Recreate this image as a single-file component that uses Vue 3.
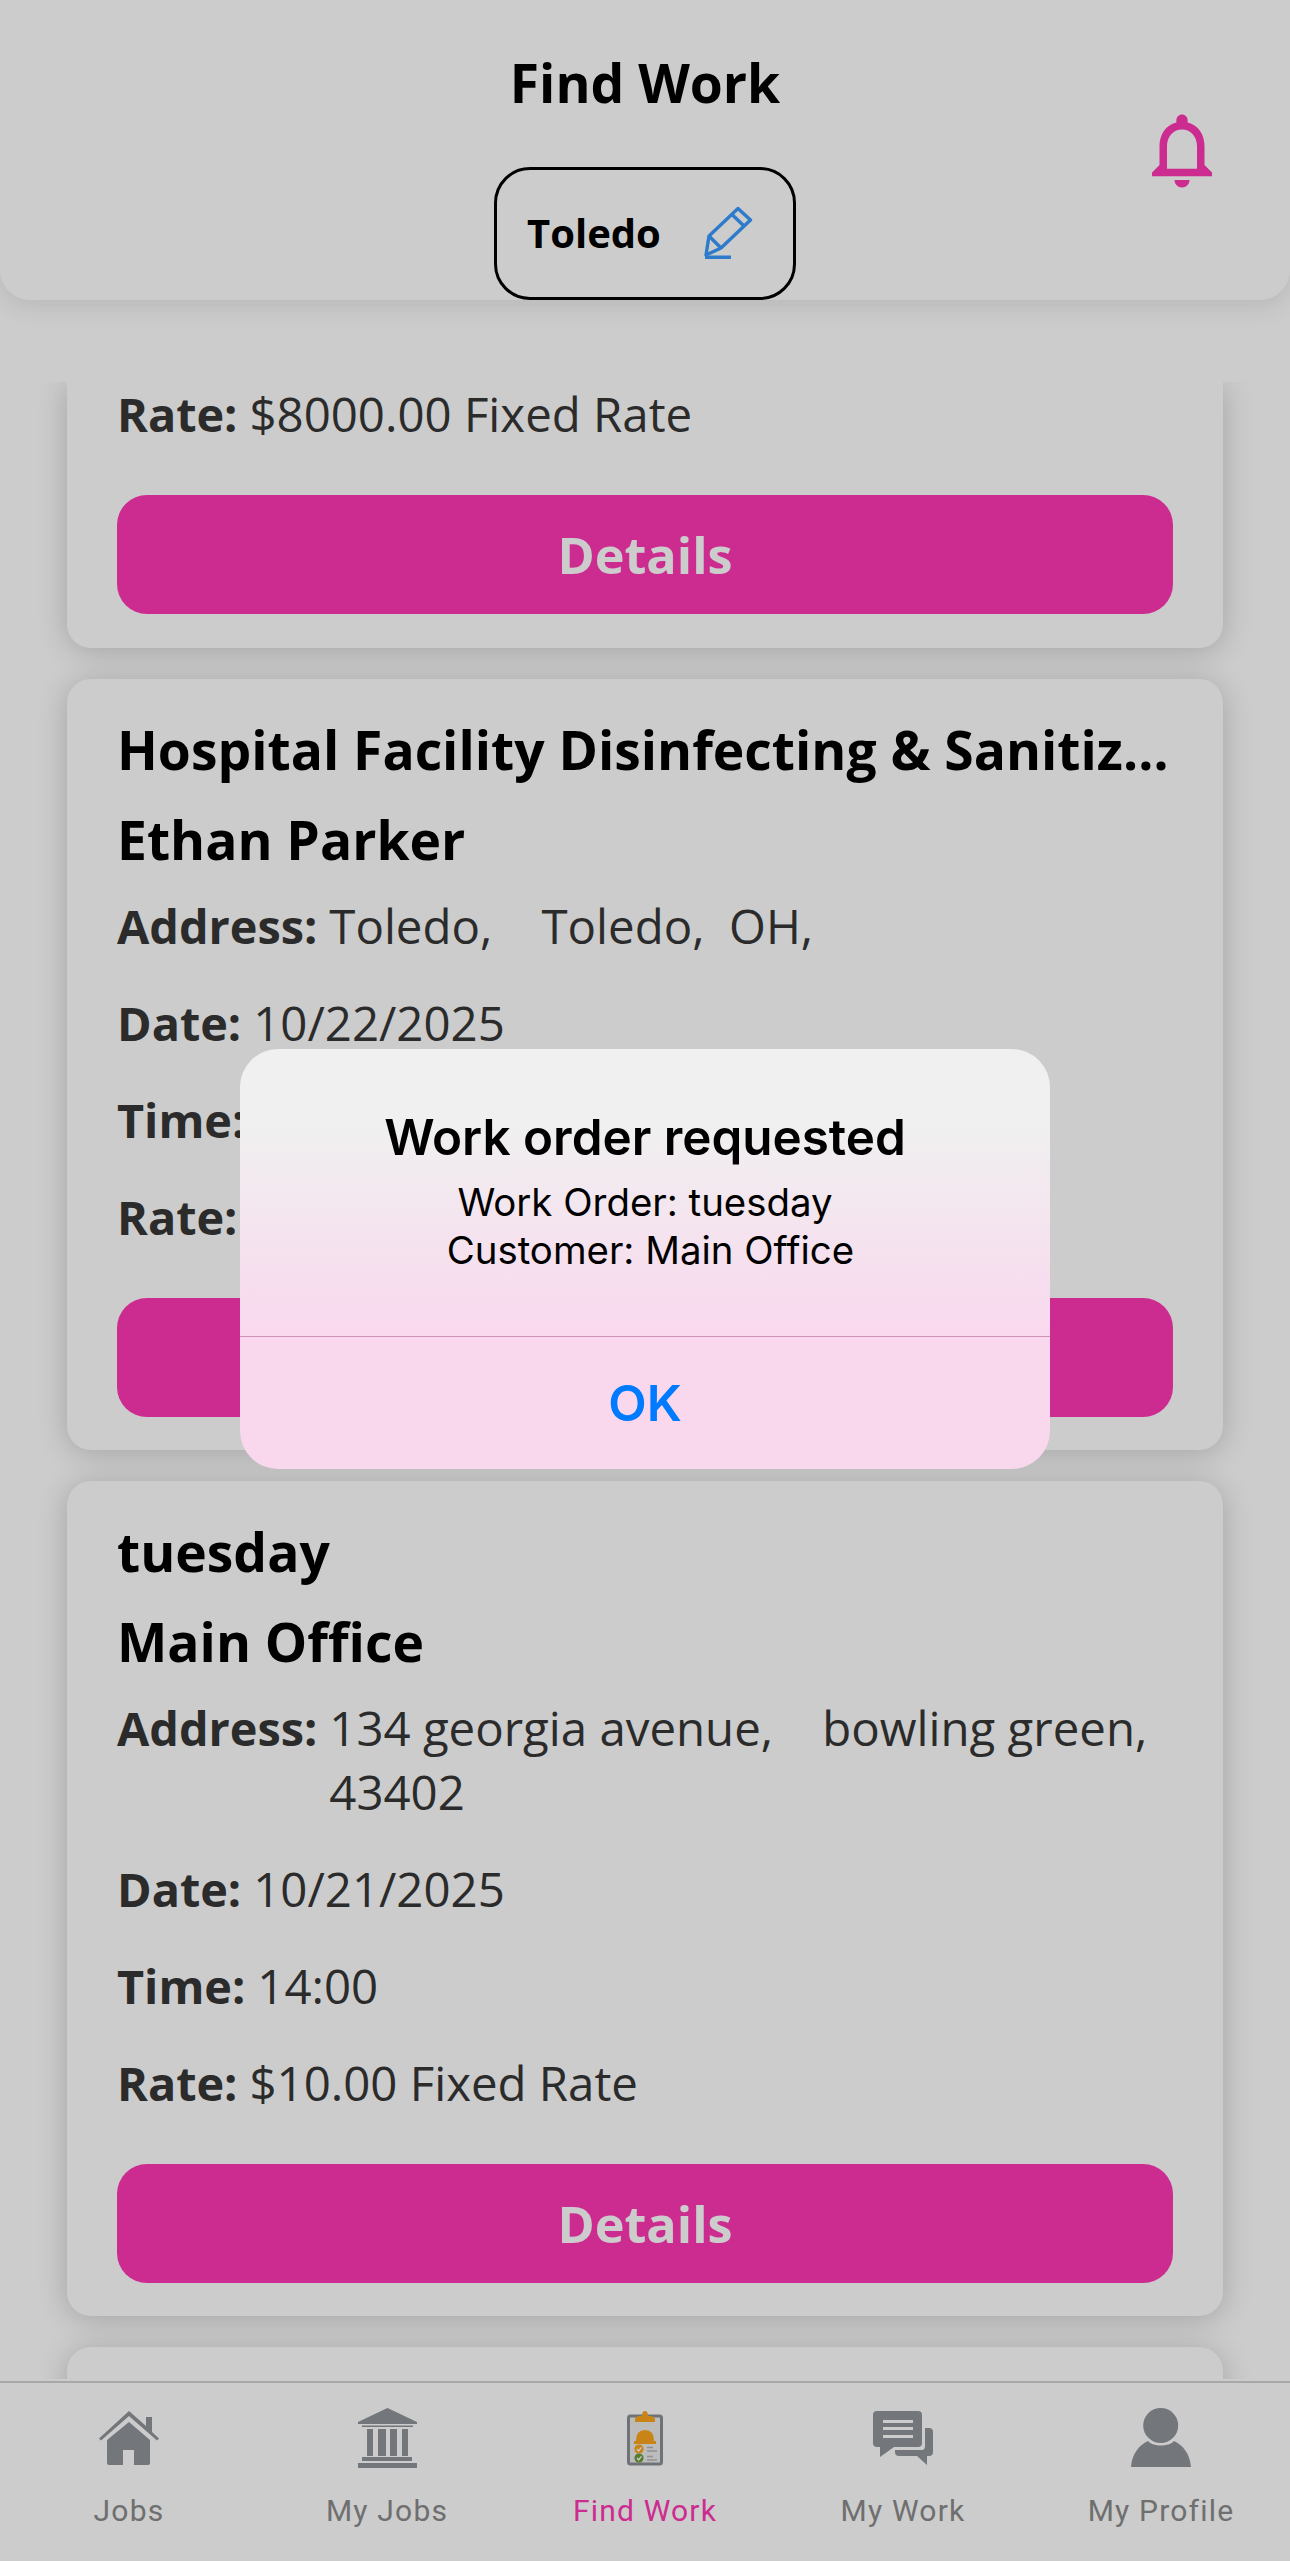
<template>
  <div class="screen">
    <header class="top-bar">
      <h1 class="page-title">Find Work</h1>
      <button class="city-chip">
        <span>{{ city }}</span>
        <svg class="pencil" width="50" height="54" viewBox="0 0 50 54" fill="none" stroke="currentColor" stroke-width="3.4">
          <path d="M2 50 5 31 34 3.5 46.5 15 17 43Z" stroke-linejoin="round"/>
          <path d="M5 31 17 43M28 9.5 40 21M1 52.3H27"/>
        </svg>
      </button>
      <svg class="bell" width="90" height="90" viewBox="0 0 24 24" fill="currentColor">
        <path d="M12 22c1.1 0 2-.9 2-2h-4c0 1.1.9 2 2 2zm6-6v-5c0-3.07-1.63-5.64-4.5-6.32V4c0-.83-.67-1.5-1.5-1.5s-1.5.67-1.5 1.5v.68C7.64 5.36 6 7.92 6 11v5l-2 2v1h16v-1l-2-2zm-2 1H8v-6c0-2.48 1.51-4.5 4-4.5s4 2.02 4 4.5v6z"/>
      </svg>
    </header>

    <main class="job-list">
      <article v-for="job in jobs" :key="job.id" class="job-card" :class="{ 'is-cut': job.rate && !job.title, 'is-next': !job.rate }">
        <template v-if="job.title">
          <h2 class="job-title">{{ job.title }}</h2>
          <h3 class="job-customer">{{ job.customer }}</h3>
          <div class="row"><b>Address:</b><span class="value">{{ job.address }}</span></div>
          <div class="row"><b>Date:</b><span class="value">{{ job.date }}</span></div>
          <div class="row"><b>Time:</b><span class="value">{{ job.time }}</span></div>
        </template>
        <template v-if="job.rate">
          <div class="row"><b>Rate:</b><span class="value">{{ job.rate }}</span></div>
          <button class="details-btn">Details</button>
        </template>
      </article>
    </main>

    <nav class="tab-bar">
      <div v-for="tab in tabs" :key="tab.label" class="tab" :class="{ active: tab.active }">
        <svg v-if="tab.icon === 'home'" class="tab-icon" width="60" height="60" viewBox="0 0 60 60" fill="currentColor">
          <path d="M30 3 47 18V9H53V24L60 30.5 58 32.5 30 8 2 32.5 0 30.5Z"/>
          <path d="M30 14 51 32V55Q51 57 49 57H35V42H24V57H10Q8 57 8 55V32Z"/>
        </svg>
        <svg v-else-if="tab.icon === 'bank'" class="tab-icon" width="60" height="60" viewBox="0 0 60 60" fill="currentColor">
          <path d="M30.5 0 60 14V16H1V14Z"/>
          <path d="M5 17.5H56V19H5ZM10 21H16V48H10ZM21 21H29V48H21ZM33 21H40V48H33ZM45 21H51V48H45ZM5 49H55V53H5ZM1 55H60V60H1Z"/>
        </svg>
        <svg v-else-if="tab.icon === 'clipboard'" class="tab-icon" width="60" height="60" viewBox="0 0 60 60">
          <rect x="13.5" y="8" width="33" height="48" rx="2" fill="#ececec" stroke="#8a9095" stroke-width="3"/>
          <path d="M20 12Q20 8 25 8H27Q27 3 30 3T33 8H35Q40 8 40 12V14H20Z" fill="#fba51c"/>
          <path d="M21 33Q21 22 30 22T39 33H41V36H19V33Z" fill="#fba51c"/>
          <circle cx="24" cy="41" r="4.6" fill="#fba51c"/>
          <circle cx="24" cy="50" r="4.6" fill="#6c9c3c"/>
          <path d="M22 41 23.7 43 26.4 39.4M22 50 23.7 52 26.4 48.4" stroke="#fff" stroke-width="1.3" fill="none"/>
          <path d="M32 39.5H38M32 43H42M32 48.5H38M32 52H42" stroke="#b5b5b5" stroke-width="1.6"/>
        </svg>
        <svg v-else-if="tab.icon === 'chat'" class="tab-icon" width="60" height="60" viewBox="0 0 60 60" fill="currentColor">
          <path fill-rule="evenodd" d="M4 3H45Q49 3 49 7V35Q49 39 45 39H21L7 49V39H4Q0 39 0 35V7Q0 3 4 3ZM10 12V15H40V12ZM10 19V22H40V19ZM10 27V30H40V27Z"/>
          <path d="M52 20H56Q60 20 60 24V44Q60 48 56 48H54V57L44 48H26Q22 48 22 44V42H49Q52 42 52 38Z"/>
        </svg>
        <svg v-else class="tab-icon" width="60" height="60" viewBox="0 0 60 60" fill="currentColor">
          <ellipse cx="29.7" cy="17.5" rx="17.5" ry="17.5"/>
          <path d="M0 59C1 46 8 37 17 33 22 39 38 39 43 33 52 37 59 46 60 59Z"/>
        </svg>
        <span class="tab-label">{{ tab.label }}</span>
      </div>
    </nav>

    <div class="dim-layer">
      <div class="alert">
        <div class="alert-body">
          <h4 class="alert-title">Work order requested</h4>
          <p class="alert-text">Work Order: tuesday</p>
          <p class="alert-text"> Customer: Main Office</p>
        </div>
        <button class="alert-ok">OK</button>
      </div>
    </div>
  </div>
</template>

<script setup>
const city = 'Toledo'

const jobs = [
  { id: 1, rate: '$8000.00 Fixed Rate' },
  {
    id: 2,
    title: 'Hospital Facility Disinfecting & Sanitization',
    customer: 'Ethan Parker',
    address: 'Toledo,    Toledo,  OH,',
    date: '10/22/2025',
    time: '09:00',
    rate: '$500.00 Fixed Rate'
  },
  {
    id: 3,
    title: 'tuesday',
    customer: 'Main Office',
    address: '134 georgia avenue,    bowling green,  43402',
    date: '10/21/2025',
    time: '14:00',
    rate: '$10.00 Fixed Rate'
  },
  { id: 4 }
]

const tabs = [
  { label: 'Jobs', icon: 'home' },
  { label: 'My Jobs', icon: 'bank' },
  { label: 'Find Work', icon: 'clipboard', active: true },
  { label: 'My Work', icon: 'chat' },
  { label: 'My Profile', icon: 'person' }
]
</script>

<style>
html, body {
  margin: 0;
  background: #fff;
}
</style>

<style scoped>
.screen {
  position: relative;
  display: flex;
  flex-direction: column;
  width: 1290px;
  height: 2561px;
  overflow: hidden;
  background: #fff;
  font-family: "Open Sans", sans-serif;
}

.top-bar {
  position: relative;
  z-index: 2;
  display: grid;
  grid-template-columns: 1fr auto 1fr;
  grid-template-rows: 167px 133px;
  flex: none;
  background: #fff;
  border-radius: 0 0 30px 30px;
  box-shadow: 0 6px 24px rgba(0, 0, 0, 0.1);
}

.page-title {
  grid-column: 2;
  grid-row: 1;
  margin: 48px 0 0;
  font-size: 53.4px;
  line-height: 70px;
  font-weight: 700;
  text-align: center;
  color: #000;
}

.city-chip {
  grid-column: 2;
  grid-row: 2;
  display: flex;
  align-items: center;
  gap: 43px;
  box-sizing: border-box;
  width: 302px;
  height: 133px;
  padding: 0 0 3px 30px;
  background: transparent;
  border: 3px solid #000;
  border-radius: 36px;
  font-family: inherit;
  font-size: 40px;
  font-weight: 700;
  color: #000;
}

.pencil {
  color: #3a9aff;
}

.bell {
  grid-column: 3;
  grid-row: 1 / span 2;
  justify-self: end;
  margin: 105px 63px 0 0;
  color: #ff37b4;
}

.job-list {
  flex: 1;
  display: flex;
  flex-direction: column;
  gap: 31px;
  min-height: 0;
  margin-top: 82px;
  margin-bottom: 2px;
  padding: 0 67px;
  overflow: hidden;
}

.job-card {
  flex: none;
  box-sizing: border-box;
  padding: 35px 50px 33px;
  background: #fff;
  border-radius: 24px;
  box-shadow: 0 3px 30px rgba(0, 0, 0, 0.2);
}

.job-card.is-cut {
  padding-top: 0;
  padding-bottom: 34px;
  border-radius: 0 0 24px 24px;
}

.job-card.is-next {
  min-height: 200px;
}

.job-title,
.job-customer {
  margin: 0;
  font-size: 53.4px;
  line-height: 71px;
  font-weight: 700;
  color: #000;
  white-space: nowrap;
  overflow: hidden;
  text-overflow: ellipsis;
}

.job-customer {
  margin-top: 19px;
}

.row {
  display: flex;
  gap: 12px;
  margin-top: 33px;
  font-size: 47.4px;
  line-height: 64px;
  color: #363636;
}

.job-customer + .row {
  margin-top: 19px;
}

.is-cut .row {
  margin-top: 0;
}

.row b {
  flex: none;
  font-size: 46.8px;
  font-weight: 700;
}

.value {
  white-space: pre-wrap;
}

.details-btn {
  display: block;
  width: 100%;
  height: 119px;
  margin-top: 49px;
  background: #ff37b4;
  border: 0;
  border-radius: 30px;
  font-family: inherit;
  font-size: 50.4px;
  font-weight: 700;
  color: #fff;
}

.tab-bar {
  display: grid;
  grid-template-columns: repeat(5, 258px);
  flex: none;
  height: 180px;
  box-sizing: border-box;
  background: #fff;
  border-top: 2px solid #d2d2d2;
}

.tab {
  display: flex;
  flex-direction: column;
  align-items: center;
  padding-top: 25px;
  font-family: Roboto, sans-serif;
  color: #8b8b8b;
}

.tab-icon {
  color: #90949a;
}

.tab-label {
  margin-top: 25px;
  font-size: 30px;
  line-height: 36px;
  letter-spacing: 1.2px;
}

.tab.active .tab-label {
  color: #ff37b4;
}

.dim-layer {
  position: absolute;
  inset: 0;
  z-index: 5;
  display: flex;
  align-items: center;
  justify-content: center;
  padding-bottom: 44px;
  box-sizing: border-box;
  background: rgba(0, 0, 0, 0.2);
}

.alert {
  width: 810px;
  height: 420px;
  display: flex;
  flex-direction: column;
  background: linear-gradient(#f0f0f0 0, #f0f0f0 18%, #f9d8ee 68%, #f9d8ee 100%);
  border-radius: 38px;
  font-family: Inter, sans-serif;
  color: #000;
  text-align: center;
}

.alert-body {
  flex: none;
  box-sizing: border-box;
  height: 288px;
  padding-top: 60px;
  border-bottom: 1px solid #cf92b8;
}

.alert-title {
  margin: 0 0 13px;
  font-size: 49.4px;
  line-height: 56px;
  font-weight: 600;
}

.alert-text {
  margin: 0;
  font-size: 38.4px;
  line-height: 48px;
  white-space: pre;
}

.alert-ok {
  flex: 1;
  background: transparent;
  border: 0;
  font-family: inherit;
  font-size: 50px;
  font-weight: 600;
  color: #007aff;
}
</style>
